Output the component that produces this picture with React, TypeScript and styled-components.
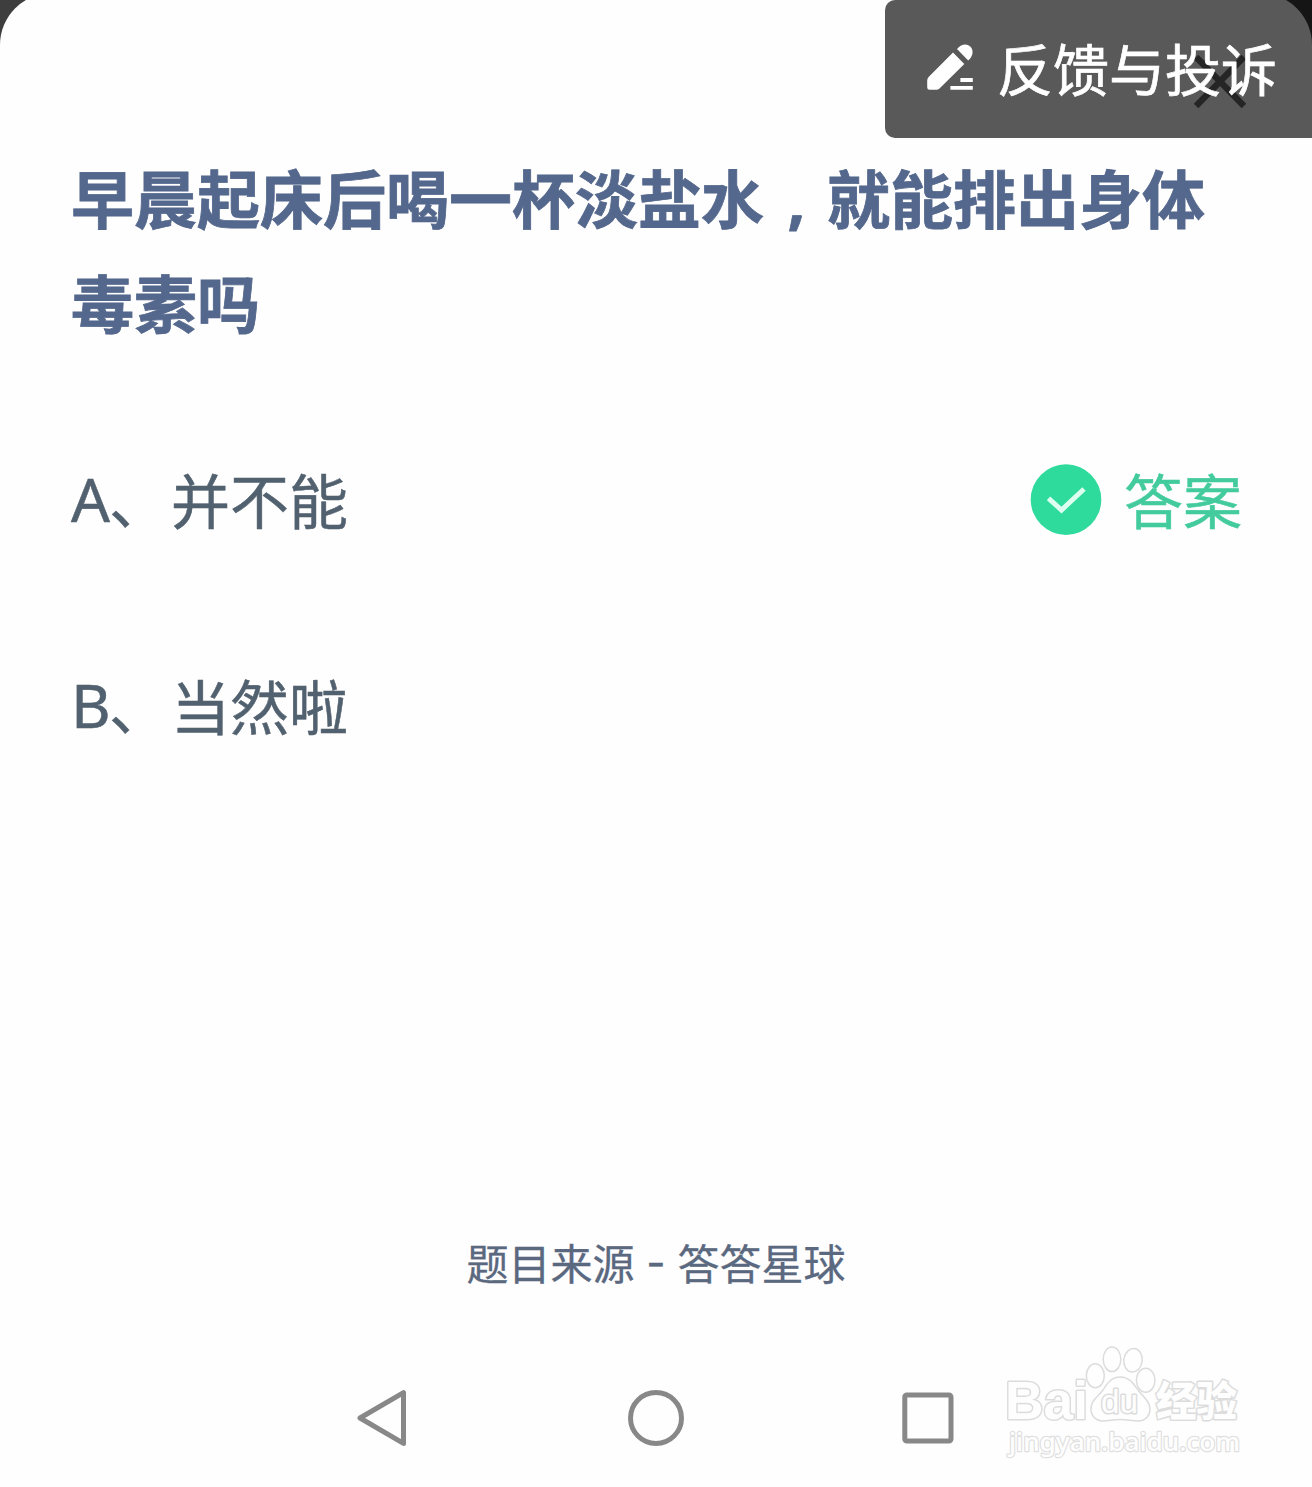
import React from 'react';
import styled, { createGlobalStyle } from 'styled-components';

const GlobalStyle = createGlobalStyle`
  *, *::before, *::after { box-sizing: border-box; }
  html, body { margin: 0; padding: 0; background: #3e3e3e; }
  body { overflow: hidden; font-family: "Noto Sans", "Noto Sans CJK SC", sans-serif; }
  svg { display: block; }
`;

const Screen = styled.div`
  position: relative;
  width: 1312px;
  height: 1487px;
  overflow: hidden;
  background: #3e3e3e;
`;

const Sheet = styled.main`
  display: flex;
  flex-direction: column;
  height: 1494px;
  margin-top: -7px;
  background: #fefefe;
  border-radius: 52px 52px 0 0;
`;

const SheetHeader = styled.header`
  display: flex;
  justify-content: flex-end;
  height: 150px;
  padding: 62px 66px 0 0;
`;

const Question = styled.h1`
  margin: 0 0 0 71px;
  height: 210px;
  font: 700 63px/105px "Noto Sans CJK SC", sans-serif;
  color: #54678c;
  -webkit-text-stroke: 0.8px #54678c;
`;

const QuestionLine = styled.span`
  display: flex;
  height: 105px;
  white-space: nowrap;
`;

const Comma = styled.span`
  width: 63px;
  padding: 3px 0 0 2px;
  text-align: center;
  font-family: "Noto Sans", sans-serif;
`;

const Options = styled.ul`
  display: flex;
  flex-direction: column;
  gap: 106px;
  margin: 98px 0 0;
  padding: 0 70px 0 71px;
  list-style: none;
`;

const Option = styled.li`
  display: flex;
  align-items: center;
  justify-content: space-between;
  height: 100px;
  font-size: 59px;
  line-height: 100px;
  color: #52616f;
  -webkit-text-stroke: 0.5px currentColor;
`;

const OptionLabel = styled.div`
  display: flex;
  align-items: center;
`;

const Letter = styled.span`
  width: 38px;
  padding-bottom: 4px;
  font-size: 61px;
  white-space: nowrap;
`;

const OptionText = styled.span`
  margin-left: 3px;
`;

const Answer = styled.div`
  display: flex;
  align-items: center;
  gap: 22px;
  font-size: 59px;
  color: #43cb9d;
`;

const Source = styled.footer`
  margin-top: auto;
  height: 64px;
  font-size: 42px;
  line-height: 64px;
  text-align: center;
  color: #5a6880;
  -webkit-text-stroke: 0.3px currentColor;
`;

const Dash = styled.span`
  font-family: Inter, sans-serif;
  white-space: pre;
  line-height: 1;
  vertical-align: 2px;
`;

const NavBar = styled.nav`
  display: flex;
  justify-content: space-between;
  align-items: center;
  height: 56px;
  margin: 94px 356px 41px 355px;
`;

const Feedback = styled.button`
  position: absolute;
  top: 0;
  right: 0;
  display: flex;
  align-items: center;
  gap: 23px;
  width: 427px;
  height: 138px;
  padding: 0 0 4px 41px;
  border: 0;
  border-radius: 10px 0 0 10px;
  background: rgba(0, 0, 0, 0.65);
  color: #fff;
  font: 400 56px/80px "Noto Sans CJK SC", sans-serif;
  -webkit-text-stroke: 0.7px #fff;
  white-space: nowrap;
`;

const Watermark = styled.div`
  position: absolute;
  left: 990px;
  top: 1330px;
`;

const CloseIcon = () => (
  <svg width="52" height="54" viewBox="0 0 52 54" fill="none" stroke="#6b6b6b" strokeWidth="6.5">
    <path d="M2 2 50 51M50 2 2 51" />
  </svg>
);

const PencilIcon = () => (
  <svg width="48" height="48" viewBox="0 0 48 48" fill="#fff">
    <path d="M27 9.6 38.3 21 13.5 45.6Q12.5 46.7 11 46.7H3.5Q1.2 46.7 1.2 44.2V37.5Q1.2 35.5 2.6 34Z" />
    <path d="M31 6C35.5.5 41 .4 44.2 3.4 47.6 6.6 47.7 12.5 42.2 17.5Z" />
    <path d="M34.4 35H46.8V39H34.4ZM24.4 43H46.8V46.8H24.4Z" />
  </svg>
);

const CheckIcon = () => (
  <svg width="72" height="72" viewBox="0 0 72 72" fill="none" overflow="visible">
    <circle cx="36" cy="34.6" r="35.3" fill="#2edb9c" />
    <path d="M18.5 33.3 31.5 45 54 24" stroke="#dcfff1" strokeWidth="5" />
  </svg>
);

const BackIcon = () => (
  <svg width="56" height="56" viewBox="0 0 56 56" fill="none" stroke="#888" strokeWidth="5" strokeLinejoin="round">
    <path d="M5 28 48.5 2.6V53.4Z" />
  </svg>
);

const HomeIcon = () => (
  <svg width="56" height="56" viewBox="0 0 56 56" fill="none" stroke="#888" strokeWidth="5">
    <circle cx="28" cy="28" r="25.5" />
  </svg>
);

const RecentIcon = () => (
  <svg width="56" height="56" viewBox="0 0 56 56" fill="none" stroke="#888" strokeWidth="5">
    <rect x="4.8" y="5" width="46.2" height="46" rx="2" />
  </svg>
);

const WatermarkLogo = () => (
  <svg width="270" height="140" viewBox="0 0 270 140" fill="#fefefe" stroke="#dcdcdc" strokeWidth="1.5" strokeLinejoin="round">
    <g paintOrder="stroke" strokeWidth="3">
      <text x="15" y="89" fontFamily="Liberation Sans, sans-serif" fontWeight="700" fontSize="54" textLength="83" lengthAdjust="spacingAndGlyphs">Bai</text>
      <text x="166" y="86" fontFamily="Noto Sans CJK SC, sans-serif" fontWeight="900" fontSize="41" textLength="81" lengthAdjust="spacingAndGlyphs">经验</text>
      <text x="19" y="121" fontFamily="Noto Sans, sans-serif" fontWeight="500" fontSize="26" stroke="#e0e0e0" strokeWidth="2.4" textLength="231" lengthAdjust="spacingAndGlyphs">jingyan.baidu.com</text>
    </g>
    <ellipse cx="105.3" cy="45.7" rx="9" ry="12" />
    <ellipse cx="122" cy="29.3" rx="8.8" ry="12.3" />
    <ellipse cx="143" cy="30.3" rx="9.2" ry="11.8" transform="rotate(8 143 30.3)" />
    <ellipse cx="155.7" cy="50.3" rx="9.3" ry="12" />
    <path d="M130 47C121 47 117 54 113 60 108 67 101 70 101 79 101 86 106 91 113 91 119 91 123 89.5 130 89.5S142 91 148 91C156 91 160 85 160 79 160 71 153 67 148 60 143 53 139 47 130 47Z" />
    <text x="111" y="83" fontFamily="Liberation Sans, sans-serif" fontSize="33" strokeWidth="3" paintOrder="stroke" textLength="37" lengthAdjust="spacingAndGlyphs">du</text>
  </svg>
);

export default function App() {
  return (
    <>
      <GlobalStyle />
      <Screen>
        <Sheet>
          <SheetHeader>
            <CloseIcon />
          </SheetHeader>
          <Question>
            <QuestionLine>
              <span>早晨起床后喝一杯淡盐水</span>
              <Comma>,</Comma>
              <span>就能排出身体</span>
            </QuestionLine>
            <QuestionLine>毒素吗</QuestionLine>
          </Question>
          <Options>
            <Option>
              <OptionLabel>
                <Letter>A</Letter>、<OptionText>并不能</OptionText>
              </OptionLabel>
              <Answer>
                <CheckIcon />
                答案
              </Answer>
            </Option>
            <Option>
              <OptionLabel>
                <Letter>B</Letter>、<OptionText>当然啦</OptionText>
              </OptionLabel>
            </Option>
          </Options>
          <Source>
            题目来源<Dash> - </Dash>答答星球
          </Source>
          <NavBar>
            <BackIcon />
            <HomeIcon />
            <RecentIcon />
          </NavBar>
        </Sheet>
        <Feedback>
          <PencilIcon />
          反馈与投诉
        </Feedback>
        <Watermark>
          <WatermarkLogo />
        </Watermark>
      </Screen>
    </>
  );
}
